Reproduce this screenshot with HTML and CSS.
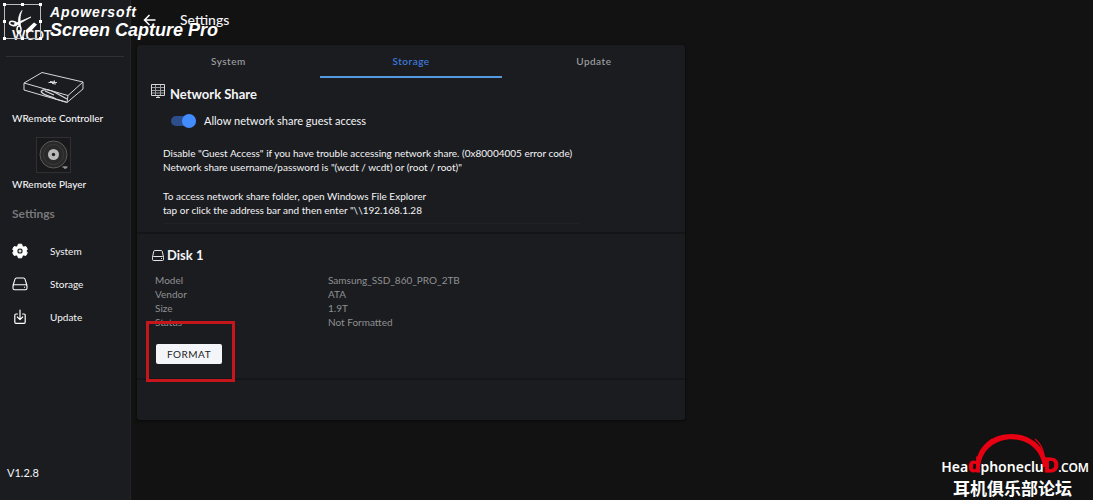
FILE: index.html
```html
<!DOCTYPE html>
<html lang="en">
<head>
<meta charset="utf-8">
<meta name="viewport" content="width=device-width, initial-scale=1">
<title>WCDT Settings</title>
<link rel="stylesheet" href="styles.css">
</head>
<body>
<div class="app">
  <aside class="sidebar">
    <div class="brand">WCDT</div>
    <nav class="devices">
      <a class="device" href="#controller">
        <svg class="device-art controller" viewBox="0 0 64 34" fill="none" stroke="#d8d8da" stroke-width="1" stroke-linejoin="round">
          <path d="M2 12 20 1.500 61 11 46 24.500ZM2 12V19L45 31.500 61 18V11M46 24.500 45 31.500"/>
          <path d="M19 20.500C22 17 29 19 34 22L45 28M19 20.500C21 25 28 24 34 28L44 31M23 20 32 24" stroke-width="1.300"/>
          <path d="M26.500 11.500H31M28 10.500 35 11.500M30 12.500 34 13M32.500 9.500 31.500 13" stroke-width="1.200"/>
        </svg>
        <span>WRemote Controller</span>
      </a>
      <a class="device" href="#player">
        <svg class="device-art player" viewBox="0 0 35 36" fill="none">
          <rect x=".5" y=".5" width="34" height="35" fill="#19191b" stroke="#303033"/>
          <circle cx="17.500" cy="17.500" r="13.500" fill="#29292a" stroke="#5b5b5d"/>
          <circle cx="17.500" cy="17.500" r="10" stroke="#3b3b3c"/>
          <circle cx="17.500" cy="17.500" r="5.500" fill="#b9b9ba"/>
          <circle cx="17.500" cy="17.500" r="1.700" fill="#202022"/>
          <path d="M26.500 30H31.500M28 31H30.500" stroke="#c0c0c0"/>
        </svg>
        <span>WRemote Player</span>
      </a>
    </nav>
    <h2 class="menu-title">Settings</h2>
    <nav class="menu">
      <a class="menu-item" href="#system">
        <svg viewBox="0 0 16 16" fill="#fff"><path fill-rule="evenodd" stroke="#fff" stroke-linejoin="round" d="M6.300 1.200h3.400l.5 2 1.600.9 2-.6 1.500 2.800L13.900 8l1.400 1.700-1.500 2.800-2-.6-1.600.9-.5 2H6.300l-.5-2-1.600-.9-2 .6L.7 9.700 2.100 8 .7 6.300l1.500-2.800 2 .6 1.600-.9ZM8 5.300a2.700 2.700 0 1 0 0 5.400 2.700 2.700 0 0 0 0-5.400Z"/><circle cx="8" cy="8" r="2.600" fill="#1b1c1f"/><circle cx="8" cy="8" r="1.500" fill="#dcdcde"/></svg>
        <span>System</span>
      </a>
      <a class="menu-item" href="#storage">
        <svg viewBox="0 0 16 16" fill="none" stroke="#fff" stroke-width="1.100"><path d="M1 9.500 3 3.200Q3.300 2 4.500 2H11.500Q12.700 2 13 3.200L15 9.500"/><rect x="1" y="8.800" width="14" height="5" rx="1.500"/><path d="M12 11.300H13"/></svg>
        <span>Storage</span>
      </a>
      <a class="menu-item" href="#update">
        <svg viewBox="0 0 16 16" fill="none" stroke="#fff" stroke-width="1.200" stroke-linecap="round" stroke-linejoin="round"><path d="M5.500 5H4Q2.800 5 2.800 6.200V13Q2.800 14.300 4 14.300H12Q13.200 14.300 13.200 13V6.200Q13.200 5 12 5H10.500M8 1V10.500M5.300 8 8 10.700 10.700 8"/></svg>
        <span>Update</span>
      </a>
    </nav>
    <div class="version">V1.2.8</div>
  </aside>

  <div class="page">
    <header class="toolbar">
      <button class="back" type="button" aria-label="Back">
        <svg viewBox="0 0 13 12" fill="none" stroke="#fff" stroke-width="1.500"><path d="M12.500 6H1.500M6.500 1 1.500 6 6.500 11"/></svg>
      </button>
      <h1>Settings</h1>
    </header>
    <main class="content">
      <div class="card">
        <div class="tabs" role="tablist">
          <button class="tab" type="button" role="tab" aria-selected="false">System</button>
          <button class="tab active" type="button" role="tab" aria-selected="true">Storage</button>
          <button class="tab" type="button" role="tab" aria-selected="false">Update</button>
        </div>
        <section class="share">
          <h2 class="section-title">
            <svg viewBox="0 0 14 14" fill="none" stroke="#d8d8da"><path d="M.5.500H13.500V11.500H.5Z"/><path d="M1 3.500H13M1 6.500H13M1 9H13M4.500 1V11M9.500 1V11" stroke="#9c9c9f"/><path d="M7 11.500V13M5 13.500H9"/></svg>
            <span>Network Share</span>
          </h2>
          <label class="toggle-row">
            <input class="toggle" type="checkbox" role="switch" checked>
            <span>Allow network share guest access</span>
          </label>
          <div class="notes">
            <p>Disable "Guest Access" if you have trouble accessing network share. (0x80004005 error code)<br>Network share username/password is "(wcdt / wcdt) or (root / root)"</p>
            <p>To access network share folder, open Windows File Explorer<br>tap or click the address bar and then enter "\\192.168.1.28</p>
          </div>
        </section>
        <section class="disk">
          <h2 class="section-title">
            <svg viewBox="0 0 14 14" fill="none" stroke="#e4e4e6"><path d="M1.500 9 2.800 3.200Q3 2.500 4 2.500H10Q11 2.500 11.200 3.200L12.500 9"/><rect x="1.500" y="8.500" width="11" height="4" rx="1"/><path d="M10 10.500H11"/></svg>
            <span>Disk 1</span>
          </h2>
          <table class="details">
            <tbody>
              <tr><th scope="row">Model</th><td>Samsung_SSD_860_PRO_2TB</td></tr>
              <tr><th scope="row">Vendor</th><td>ATA</td></tr>
              <tr><th scope="row">Size</th><td>1.9T</td></tr>
              <tr><th scope="row">Status</th><td>Not Formatted</td></tr>
            </tbody>
          </table>
          <div class="action">
            <button class="format" type="button">FORMAT</button>
            <span class="highlight"></span>
          </div>
        </section>
        <div class="card-end"></div>
      </div>
    </main>
  </div>
</div>

<div class="capture-mark">
  <svg viewBox="0 0 40 38" fill="none" stroke="#fff">
    <path d="M2.500 2.500H38.500V36.500H2.500Z" stroke="#bbb"/>
    <path d="M1 1H4V4H1ZM19 1H22V4H19ZM37 1H40V4H37ZM1 18H4V21H1ZM37 18H40V21H37ZM1 35H4V38H1ZM19 35H22V38H19ZM37 35H40V38H37Z" fill="#fff" stroke="none"/>
    <path d="M20 8.500C17.500 14 18 19 18.500 24L16.500 23C16 17 17 12 20 8.500ZM29 15 13 24 12 22Z" fill="#fff" stroke-width=".8"/>
    <ellipse cx="11" cy="21.500" rx="3.500" ry="2" stroke-width="1.500" transform="rotate(12 11 21.500)"/>
    <ellipse cx="17" cy="27.500" rx="2" ry="3.500" stroke-width="1.500"/>
    <path d="M24 28 32 20.500 35 22.500 29 29 24 31Z" fill="#fff" stroke="none"/>
  </svg>
  <div class="capture-text"><span class="capture-maker">Apowersoft</span><span class="capture-name">Screen Capture Pro</span></div>
</div>

<div class="club-mark">
  <svg viewBox="0 0 78 36" fill="none" stroke="#e60012">
    <path fill="#e60012" stroke="none" d="M3 34C3-10 73-10 74 34H70C66-3 11-3 7 34Z"/>
    <path d="M8 22C9 15 12 10 17 6M69 22C68 15 65 10 60 6" stroke-width="1.200" transform="translate(2 0)"/>
  </svg>
  <div class="club-name"><span>Hea</span><b>d</b><span>phoneclu</span><b>D</b><span class="club-domain">.COM</span></div>
  <div class="club-cn">耳机俱乐部论坛</div>
</div>
</body>
</html>
```

FILE: styles.css
```css
* { box-sizing: border-box; }
body {
  margin: 0;
  background: #121212;
  color: #f4f5f8;
  font-family: Lato, "Noto Sans CJK SC", sans-serif;
  font-size: 10px;
  line-height: 14px;
}
h1, h2, p { margin: 0; }
a { color: inherit; text-decoration: none; }
button { border: 0; padding: 0; font: inherit; color: inherit; background: none; cursor: pointer; }
svg { display: block; flex: none; }

.app { display: flex; min-height: 100vh; }
.sidebar {
  display: flex;
  flex-direction: column;
  flex: none;
  width: 131px;
  background: #1b1c1f;
  border-right: 1px solid #242528;
}
.brand {
  height: 57px;
  margin: 0 6px;
  padding: 26px 0 0 6px;
  border-bottom: 1px solid #303134;
  font-size: 13px;
  font-weight: 700;
  line-height: 18px;
}
.devices { display: flex; flex-direction: column; padding: 12px 12px 0; }
.device { display: flex; flex-direction: column; font-weight: 500; }
.device + .device { padding-top: 12px; }
.controller { width: 64px; height: 34px; margin: 2px 0 6px 10px; }
.player { width: 35px; height: 36px; margin: 0 0 4px 24px; }
.device span { line-height: 14px; }
.menu-title {
  margin-top: 14px;
  padding-left: 12px;
  color: #77787b;
  font-size: 12px;
  font-weight: 700;
  line-height: 18px;
}
.menu { padding: 11px 0 0 12px; }
.menu-item { display: flex; align-items: center; gap: 22px; height: 33px; }
.menu-item svg { width: 16px; height: 16px; }
.version { margin-top: auto; padding: 0 7px 19px; font-size: 11px; line-height: 16px; }

.page { flex: 1; min-width: 0; }
.toolbar { display: flex; align-items: center; gap: 24px; height: 39px; padding-left: 12px; }
.toolbar h1 { font-size: 14px; font-weight: 500; line-height: 18px; }
.back svg { width: 13px; height: 12px; }
.content { display: grid; grid-template-columns: 7fr 5fr; padding: 6px; }
.card { margin-right: 6px; background: #1b1c1f; border-radius: 3px; box-shadow: 0 1px 3px #080808; }

.tabs { display: grid; grid-template-columns: repeat(3, 1fr); }
.tab { height: 33px; border-bottom: 2px solid transparent; color: #a0a1a4; font-weight: 500; letter-spacing: 0.5px; }
.tab.active { color: #3f7fe0; border-bottom-color: #5598df; }

.share { padding: 6px 14px 8px; border-bottom: 2px solid #141517; }
.section-title { display: flex; align-items: center; gap: 5px; font-size: 13px; line-height: 20px; }
.section-title svg { width: 14px; height: 14px; }
.share .section-title { align-items: flex-start; }
.toggle-row { display: flex; align-items: center; gap: 8px; height: 33px; padding-left: 20px; font-size: 11px; }
.toggle {
  appearance: none;
  display: flex;
  align-items: center;
  justify-content: flex-end;
  width: 25px;
  height: 10px;
  margin: 0;
  border-radius: 5px;
  background: #2c4f8c;
}
.toggle::before { content: ""; flex: none; width: 14px; height: 14px; border-radius: 50%; background: #428cff; }
.toggle:not(:checked) { justify-content: flex-start; background: #444; }
.notes { display: grid; gap: 15px; width: 80%; margin-left: 12px; padding: 9px 0 6px; border-bottom: 1px solid #202124; }

.disk { padding: 11px 14px 14px; border-bottom: 2px solid #151619; }
.disk .section-title { gap: 2px; }
.details { width: 100%; margin: 8px 0 0 4px; border-collapse: collapse; table-layout: fixed; color: #8f9093; }
.details th { width: 173px; font-weight: 400; text-align: left; }
.details th, .details td { padding: 0; height: 14px; }
.action { position: relative; width: 66px; margin: 15px 0 0 5px; }
.format { width: 100%; height: 20px; border-radius: 2px; background: #f4f5f8; color: #1b1c1f; letter-spacing: 0.5px; }
.highlight { position: absolute; inset: -23px -13px -18px -10px; border: 3px solid #c5161c; pointer-events: none; }
.card-end { height: 40px; }

.capture-mark { position: absolute; left: 2px; top: 2px; display: flex; gap: 8px; color: #fff; font-family: "Liberation Sans", Arial, sans-serif; font-style: italic; pointer-events: none; }
.capture-mark svg { width: 40px; height: 38px; }
.capture-text { display: flex; flex-direction: column; white-space: nowrap; }
.capture-maker { font-size: 14px; font-weight: 700; line-height: 20px; letter-spacing: 1px; }
.capture-name { font-size: 18px; font-weight: 700; line-height: 16px; }

.club-mark { position: absolute; right: 4px; bottom: 2px; width: 152px; color: #fff; pointer-events: none; }
.club-mark svg { position: absolute; left: 36px; top: -22px; width: 78px; height: 36px; }
.club-name { display: flex; align-items: baseline; justify-content: flex-end; font-family: "Noto Sans", sans-serif; font-size: 14px; font-weight: 600; line-height: 20px; }
.club-name b { color: #e60012; font-family: "Liberation Sans", Arial, sans-serif; font-size: 20px; font-weight: 700; -webkit-text-stroke: 1px #e60012; }
.club-domain { font-size: 12px; }
.club-cn { padding-left: 16px; font-family: "Noto Sans CJK SC", sans-serif; font-size: 17px; font-weight: 700; line-height: 20px; }
```
